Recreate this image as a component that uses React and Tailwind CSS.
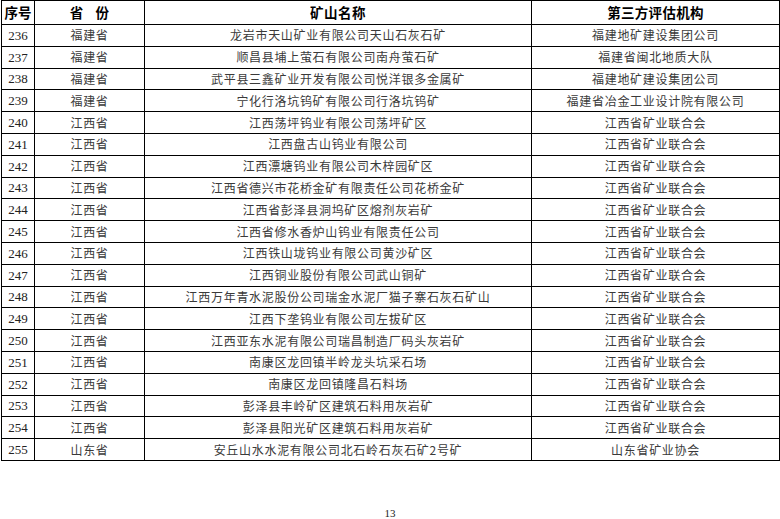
const rows = [
  ["236", "福建省", "龙岩市天山矿业有限公司天山石灰石矿", "福建地矿建设集团公司"],
  ["237", "福建省", "顺昌县埔上萤石有限公司南舟萤石矿", "福建省闽北地质大队"],
  ["238", "福建省", "武平县三鑫矿业开发有限公司悦洋银多金属矿", "福建地矿建设集团公司"],
  ["239", "福建省", "宁化行洛坑钨矿有限公司行洛坑钨矿", "福建省冶金工业设计院有限公司"],
  ["240", "江西省", "江西荡坪钨业有限公司荡坪矿区", "江西省矿业联合会"],
  ["241", "江西省", "江西盘古山钨业有限公司", "江西省矿业联合会"],
  ["242", "江西省", "江西漂塘钨业有限公司木梓园矿区", "江西省矿业联合会"],
  ["243", "江西省", "江西省德兴市花桥金矿有限责任公司花桥金矿", "江西省矿业联合会"],
  ["244", "江西省", "江西省彭泽县洞坞矿区熔剂灰岩矿", "江西省矿业联合会"],
  ["245", "江西省", "江西省修水香炉山钨业有限责任公司", "江西省矿业联合会"],
  ["246", "江西省", "江西铁山垅钨业有限公司黄沙矿区", "江西省矿业联合会"],
  ["247", "江西省", "江西铜业股份有限公司武山铜矿", "江西省矿业联合会"],
  ["248", "江西省", "江西万年青水泥股份公司瑞金水泥厂猫子寨石灰石矿山", "江西省矿业联合会"],
  ["249", "江西省", "江西下垄钨业有限公司左拔矿区", "江西省矿业联合会"],
  ["250", "江西省", "江西亚东水泥有限公司瑞昌制造厂码头灰岩矿", "江西省矿业联合会"],
  ["251", "江西省", "南康区龙回镇半岭龙头坑采石场", "江西省矿业联合会"],
  ["252", "江西省", "南康区龙回镇隆昌石料场", "江西省矿业联合会"],
  ["253", "江西省", "彭泽县丰岭矿区建筑石料用灰岩矿", "江西省矿业联合会"],
  ["254", "江西省", "彭泽县阳光矿区建筑石料用灰岩矿", "江西省矿业联合会"],
  ["255", "山东省", "安丘山水水泥有限公司北石岭石灰石矿2号矿", "山东省矿业协会"],
];

const cjk = "font-['Noto_Sans_CJK_SC',sans-serif]";

export default function App() {
  return (
    <div className="w-[780px] h-[519px] bg-white relative overflow-hidden">
      <table className="ml-px w-[778px] table-fixed border-collapse border border-black">
        <colgroup>
          <col className="w-[33px]" />
          <col className="w-[110px]" />
          <col className="w-[387px]" />
          <col className="w-[248px]" />
        </colgroup>
        <thead>
          <tr className={`h-[24px] ${cjk} text-[13.5px] font-bold text-black leading-none`}>
            <th className="border border-black p-0 text-center">序号</th>
            <th className="border border-black p-0 text-center whitespace-pre">省    份</th>
            <th className="border border-black p-0 text-center tracking-[0.5px]">矿山名称</th>
            <th className="border border-black p-0 text-center tracking-[0.3px]">第三方评估机构</th>
          </tr>
        </thead>
        <tbody>
          {rows.map((r) => (
            <tr key={r[0]} className="h-[21.8px] leading-none">
              <td className="border border-black p-0 text-center font-['Liberation_Serif',serif] text-[13px] text-[#222]">{r[0]}</td>
              <td className={`border border-black p-0 text-center ${cjk} text-[12px] tracking-[0.7px] text-[#3a3a3a]`}>{r[1]}</td>
              <td className={`border border-black p-0 text-center ${cjk} text-[12px] tracking-[0.7px] text-[#3a3a3a] whitespace-nowrap`}>{r[2]}</td>
              <td className={`border border-black p-0 text-center ${cjk} text-[12px] tracking-[0.7px] text-[#3a3a3a] whitespace-nowrap`}>{r[3]}</td>
            </tr>
          ))}
        </tbody>
      </table>
      <div className="absolute left-0 right-0 top-[505px] text-center font-['Liberation_Serif',serif] text-[11px] text-[#222]">13</div>
    </div>
  );
}
